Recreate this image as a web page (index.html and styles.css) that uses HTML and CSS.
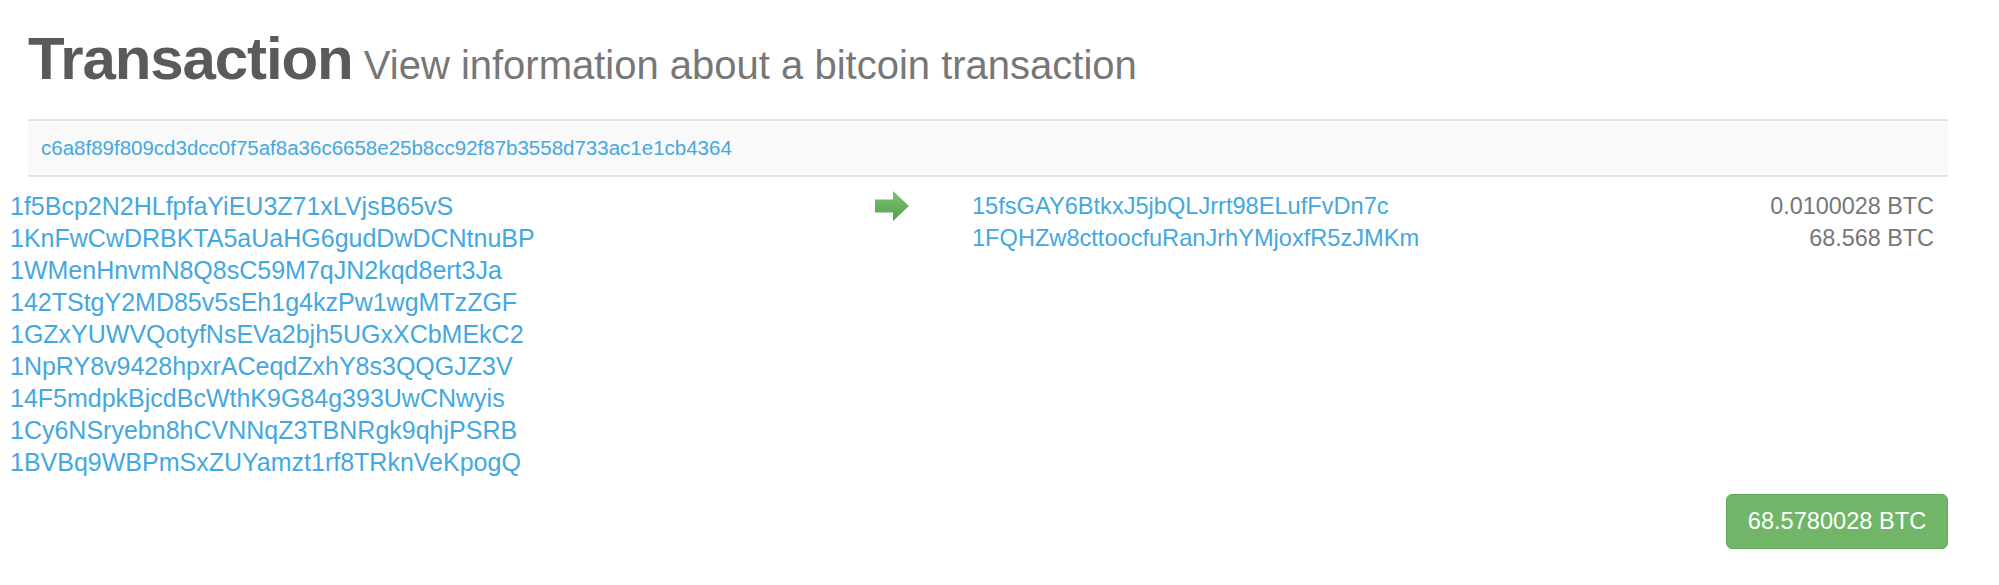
FILE: index.html
```html
<!DOCTYPE html>
<html lang="en">
<head>
    <meta charset="UTF-8">
    <meta name="viewport" content="width=device-width, initial-scale=1.0">
    <title>Transaction</title>
    <link rel="stylesheet" href="styles.css">
</head>
<body>
    <div class="page">
        <h1 class="page-title">Transaction<small> View information about a bitcoin transaction</small></h1>

        <div class="tx">
            <div class="tx-hash">
                <a href="#">c6a8f89f809cd3dcc0f75af8a36c6658e25b8cc92f87b3558d733ac1e1cb4364</a>
            </div>

            <div class="tx-body">
                <!-- inputs -->
                <div class="tx-inputs">
                    <a href="#">1f5Bcp2N2HLfpfaYiEU3Z71xLVjsB65vS</a>
                    <a href="#">1KnFwCwDRBKTA5aUaHG6gudDwDCNtnuBP</a>
                    <a href="#">1WMenHnvmN8Q8sC59M7qJN2kqd8ert3Ja</a>
                    <a href="#">142TStgY2MD85v5sEh1g4kzPw1wgMTzZGF</a>
                    <a href="#">1GZxYUWVQotyfNsEVa2bjh5UGxXCbMEkC2</a>
                    <a href="#">1NpRY8v9428hpxrACeqdZxhY8s3QQGJZ3V</a>
                    <a href="#">14F5mdpkBjcdBcWthK9G84g393UwCNwyis</a>
                    <a href="#">1Cy6NSryebn8hCVNNqZ3TBNRgk9qhjPSRB</a>
                    <a href="#">1BVBq9WBPmSxZUYamzt1rf8TRknVeKpogQ</a>
                </div>

                <div class="tx-arrow">
                    <svg width="34" height="30" viewBox="0 0 34 30">
                        <defs>
                            <linearGradient id="arrowFill" x1="0" y1="0" x2="0" y2="1">
                                <stop offset="0" stop-color="#7cc474"/>
                                <stop offset="1" stop-color="#539f4c"/>
                            </linearGradient>
                        </defs>
                        <path d="M0 8.5 H18 V0 L34 15 L18 30 V21.5 H0 Z" fill="url(#arrowFill)"/>
                    </svg>
                </div>

                <!-- outputs -->
                <div class="tx-outputs">
                    <div class="out-row">
                        <a href="#">15fsGAY6BtkxJ5jbQLJrrt98ELufFvDn7c</a>
                        <span class="amount">0.0100028 BTC</span>
                    </div>
                    <div class="out-row">
                        <a href="#">1FQHZw8cttoocfuRanJrhYMjoxfR5zJMKm</a>
                        <span class="amount">68.568 BTC</span>
                    </div>
                </div>
            </div>

            <div class="tx-footer">
                <span class="btn-total">68.5780028 BTC</span>
            </div>
        </div>
    </div>
</body>
</html>
```

FILE: styles.css
```css
body {
    font-family: 'Liberation Sans', Arial, Helvetica, sans-serif;
    background-color: #fff;
    margin: 0;
    color: #333;
}

a {
    color: #44a8df;
    text-decoration: none;
}

.page {
    padding: 26px 51px 0 28px;
}

.page-title {
    margin: 0 0 21px 0;
    font-size: 60px;
    line-height: 66px;
    font-weight: bold;
    letter-spacing: -1.1px;
    color: #5a5a5a;
}

.page-title small {
    font-size: 40px;
    font-weight: normal;
    letter-spacing: 0;
    color: #777;
}

.tx-hash {
    background-color: #f9f9f9;
    border-top: 2px solid #e3e3e3;
    border-bottom: 2px solid #e3e3e3;
    padding: 0 13px;
    height: 54px;
    display: flex;
    align-items: center;
    font-size: 20.5px;
}

.tx-body {
    display: flex;
    padding-top: 13px;
}

.tx-inputs {
    width: 865px;
    margin-left: -18px;
    display: flex;
    flex-direction: column;
    align-items: flex-start;
    font-size: 25px;
    line-height: 32px;
}

.tx-arrow {
    width: 97px;
    padding-top: 1px;
}

.tx-arrow svg {
    display: block;
}

.tx-outputs {
    flex: 1;
    padding-right: 14px;
    font-size: 23.6px;
    line-height: 32px;
}

.out-row {
    display: flex;
    justify-content: space-between;
}

.amount {
    color: #777;
    font-size: 23.4px;
}

.tx-footer {
    display: flex;
    justify-content: flex-end;
    padding-top: 16px;
}

.btn-total {
    background-color: #70b568;
    border: 1px solid #63a95b;
    border-radius: 6px;
    color: #fff;
    font-size: 23.6px;
    width: 220px;
    height: 53px;
    display: flex;
    align-items: center;
    justify-content: center;
}
```
